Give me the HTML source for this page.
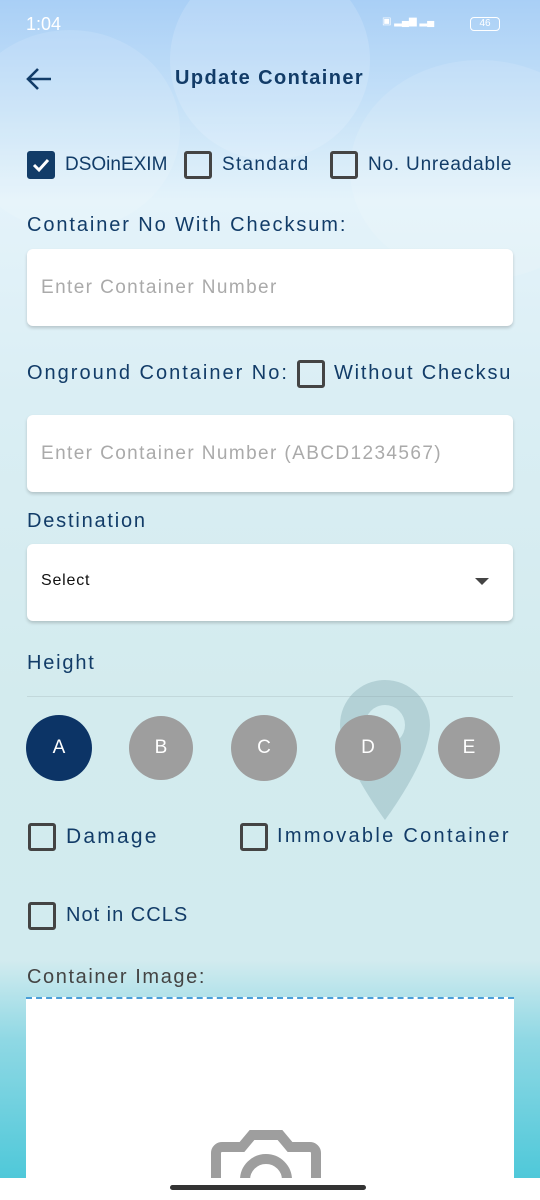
<!DOCTYPE html>
<html><head><meta charset="utf-8"><style>
*{margin:0;padding:0;box-sizing:border-box}
body{width:540px;height:1200px;overflow:hidden;position:relative;font-family:"Liberation Sans",sans-serif;
background:linear-gradient(180deg,#a9cff6 0px,#c7e2f8 110px,#e4f3fa 200px,#daeef4 400px,#d3ebee 700px,#d2ebef 960px,#8fd8e4 1040px,#4ec8d9 1180px);}
.t{position:absolute;color:#123c68;white-space:nowrap}
.cb{position:absolute;width:28px;height:28px;border:3px solid #444;border-radius:3px}
.in{position:absolute;left:27px;width:486px;background:#fff;border-radius:6px;box-shadow:0 2px 3px rgba(0,0,0,.18)}
.ph{position:absolute;left:14px;color:#aaa;font-size:19px;letter-spacing:1.4px}
.c{position:absolute;border-radius:50%;background:#9e9e9e;color:#fff;font-size:19px;display:flex;align-items:center;justify-content:center}
</style></head><body>
<div style="position:absolute;left:170px;top:-40px;width:200px;height:200px;border-radius:50%;background:rgba(255,255,255,.15)"></div>
<div style="position:absolute;left:-40px;top:30px;width:220px;height:200px;border-radius:50%;background:rgba(255,255,255,.12)"></div>
<div style="position:absolute;left:350px;top:60px;width:260px;height:220px;border-radius:50%;background:rgba(255,255,255,.12)"></div>
<div class="t" style="left:26px;top:14px;font-size:18px;color:#fff">1:04</div>
<div class="t" style="left:470px;top:17px;width:30px;height:14px;border:1.5px solid #fff;border-radius:4px;font-size:10px;color:#fff;text-align:center;line-height:11px">46</div>
<div class="t" style="left:382px;top:16px;font-size:10px;color:#fff">▣ ▂▄▆ ▂▄</div>
<svg style="position:absolute;left:24px;top:66px" width="30" height="26" viewBox="0 0 30 26"><path d="M27 13H4M14 3L4 13l10 10" fill="none" stroke="#123c68" stroke-width="2.6"/></svg>
<div class="t" style="left:175px;top:67px;font-size:20px;font-weight:bold;letter-spacing:1.4px">Update Container</div>
<div class="cb" style="left:27px;top:151px;background:#123c68;border-color:#123c68"><svg width="22" height="22" viewBox="0 0 22 22" style="position:absolute;left:0;top:0"><path d="M4 11l5 5 9-10" fill="none" stroke="#fff" stroke-width="3"/></svg></div>
<div class="t" style="left:65px;top:154px;font-size:19px">DSOinEXIM</div>
<div class="cb" style="left:184px;top:151px"></div>
<div class="t" style="left:222px;top:154px;font-size:19px;letter-spacing:1.3px">Standard</div>
<div class="cb" style="left:330px;top:151px"></div>
<div class="t" style="left:368px;top:154px;font-size:19px;letter-spacing:0.8px">No. Unreadable</div>
<div class="t" style="left:27px;top:214px;font-size:20px;letter-spacing:1.9px">Container No With Checksum:</div>
<div class="in" style="top:249px;height:77px"><div class="ph" style="top:28px">Enter Container Number</div></div>
<div class="t" style="left:27px;top:362px;font-size:20px;letter-spacing:2px">Onground Container No:</div>
<div class="cb" style="left:297px;top:360px"></div>
<div class="t" style="left:334px;top:362px;font-size:20px;letter-spacing:1.8px">Without Checksu</div>
<div class="in" style="top:415px;height:77px"><div class="ph" style="top:28px">Enter Container Number (ABCD1234567)</div></div>
<div class="t" style="left:27px;top:510px;font-size:20px;letter-spacing:1.8px">Destination</div>
<div class="in" style="top:544px;height:77px"><div class="ph" style="top:28px;color:#111;font-size:16px;letter-spacing:0.8px">Select</div>
<div style="position:absolute;right:24px;top:34px;border-left:7px solid transparent;border-right:7px solid transparent;border-top:7px solid #444"></div></div>
<div class="t" style="left:27px;top:652px;font-size:20px;letter-spacing:1.8px">Height</div>
<div style="position:absolute;left:27px;top:696px;width:486px;height:1px;background:rgba(0,0,0,.08)"></div>
<svg style="position:absolute;left:330px;top:675px" width="110" height="150" viewBox="0 0 110 150"><path d="M55 5a45 45 0 0 0-45 45c0 35 45 95 45 95s45-60 45-95A45 45 0 0 0 55 5z" fill="rgba(120,160,170,.35)"/><circle cx="55" cy="50" r="20" fill="#d3ebee"/></svg>
<div class="c" style="left:26px;top:715px;width:66px;height:66px;background:#0c3466">A</div>
<div class="c" style="left:129px;top:716px;width:64px;height:64px">B</div>
<div class="c" style="left:231px;top:715px;width:66px;height:66px">C</div>
<div class="c" style="left:335px;top:715px;width:66px;height:66px">D</div>
<div class="c" style="left:438px;top:717px;width:62px;height:62px">E</div>
<div class="cb" style="left:28px;top:823px"></div>
<div class="t" style="left:66px;top:825px;font-size:21px;letter-spacing:2.2px">Damage</div>
<div class="cb" style="left:240px;top:823px"></div>
<div class="t" style="left:277px;top:825px;font-size:20px;letter-spacing:2.3px">Immovable Container</div>
<div class="cb" style="left:28px;top:902px"></div>
<div class="t" style="left:66px;top:904px;font-size:20px;letter-spacing:1px">Not in CCLS</div>
<div class="t" style="left:27px;top:966px;font-size:20px;color:#444;letter-spacing:1.6px">Container Image:</div>
<div style="position:absolute;left:26px;top:997px;width:488px;height:190px;background:#fff;border-top:2px dashed #4a9fd8"></div>
<svg style="position:absolute;left:208px;top:1120px" width="116" height="60" viewBox="0 0 116 60"><path d="M8 60V33a6 6 0 0 1 6-6h20l10-12h28l10 12h20a6 6 0 0 1 6 6v27" fill="none" stroke="#9e9e9e" stroke-width="10"/><circle cx="58" cy="60" r="21" fill="none" stroke="#9e9e9e" stroke-width="10"/></svg>
<div style="position:absolute;left:0;top:1178px;width:540px;height:22px;background:#fff"></div>
<div style="position:absolute;left:170px;top:1185px;width:196px;height:5px;border-radius:3px;background:#333"></div>
</body></html>
